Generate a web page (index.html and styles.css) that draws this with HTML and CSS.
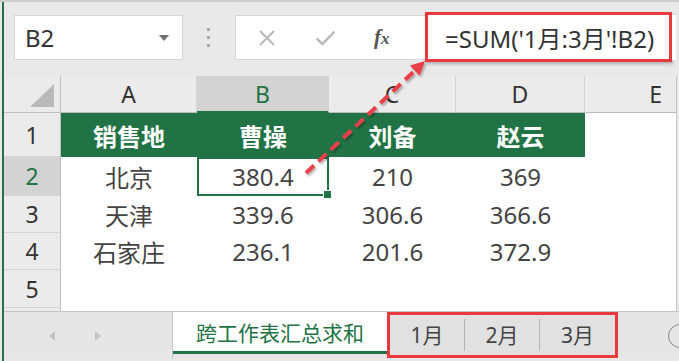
FILE: index.html
```html
<!DOCTYPE html>
<html lang="zh-CN">

<head>
    <meta charset="UTF-8">
    <meta name="viewport" content="width=device-width, initial-scale=1.0">
    <title>跨工作表汇总求和</title>
    <link rel="stylesheet" href="styles.css">
</head>

<body>
    <div class="window">
        <div class="frame">
            <!-- Barra de fórmulas -->
            <div class="formula-bar">
                <div class="name-box">
                    <span class="name">B2</span>
                    <span class="caret"></span>
                </div>
                <div class="grip"><i></i><i></i><i></i></div>
                <div class="fx-box">
                    <svg class="icon cancel" width="18" height="18" viewBox="0 0 18 18">
                        <path d="M2 2 L16 16 M16 2 L2 16" stroke="#b8b8b8" stroke-width="2" fill="none" />
                    </svg>
                    <svg class="icon ok" width="21" height="16" viewBox="0 0 21 16">
                        <path d="M1.5 8.5 L7.5 14 L19.5 1.5" stroke="#b8b8b8" stroke-width="2.4" fill="none" />
                    </svg>
                    <span class="fx">f<small>x</small></span>
                </div>
                <div class="formula">=SUM('1月:3月'!B2)</div>
                <div class="formula-tail"></div>
            </div>

            <!-- Hoja -->
            <div class="grid">
                <div class="corner">
                    <svg width="24" height="23" viewBox="0 0 24 23">
                        <polygon points="24,0 24,23 0,23" fill="#b9b9b9" />
                    </svg>
                </div>
                <div class="ch">A</div>
                <div class="ch on">B</div>
                <div class="ch">C</div>
                <div class="ch">D</div>
                <div class="ch last">E</div>

                <div class="rh">1</div>
                <div class="hd">销售地</div>
                <div class="hd">曹操</div>
                <div class="hd">刘备</div>
                <div class="hd">赵云</div>
                <div class="c"></div>

                <div class="rh on">2</div>
                <div class="c">北京</div>
                <div class="c sel">380.4</div>
                <div class="c">210</div>
                <div class="c">369</div>
                <div class="c"></div>

                <div class="rh">3</div>
                <div class="c">天津</div>
                <div class="c">339.6</div>
                <div class="c">306.6</div>
                <div class="c">366.6</div>
                <div class="c"></div>

                <div class="rh">4</div>
                <div class="c">石家庄</div>
                <div class="c">236.1</div>
                <div class="c">201.6</div>
                <div class="c">372.9</div>
                <div class="c"></div>

                <div class="rh">5</div>
                <div class="c"></div>
                <div class="c"></div>
                <div class="c"></div>
                <div class="c"></div>
                <div class="c"></div>

                <div class="rh sliver"></div>
                <div class="c"></div>
                <div class="c"></div>
                <div class="c"></div>
                <div class="c"></div>
                <div class="c"></div>
            </div>

            <!-- Pestañas -->
            <div class="tab-bar">
                <div class="nav">
                    <span class="arrow-l"></span>
                    <span class="arrow-r"></span>
                </div>
                <div class="tab active">跨工作表汇总求和</div>
                <div class="tabs-box">
                    <div class="tab">1月</div>
                    <div class="tab">2月</div>
                    <div class="tab">3月</div>
                </div>
                <div class="tab-rest"><span class="add"></span></div>
            </div>
        </div>

        <svg class="pointer" width="679" height="361" viewBox="0 0 679 361">
            <defs>
                <filter id="sombra" x="-20%" y="-20%" width="140%" height="140%">
                    <feDropShadow dx="1.5" dy="2" stdDeviation="1.2" flood-color="#000" flood-opacity="0.3" />
                </filter>
            </defs>
            <g filter="url(#sombra)">
                <line x1="306" y1="173" x2="414.8" y2="70.6" stroke="#e8414a" stroke-width="4"
                    stroke-dasharray="11 6" />
                <polygon points="425,61 419.6,75.7 410,65.5" fill="#e8414a" />
            </g>
        </svg>
    </div>
</body>

</html>
```

FILE: styles.css
```css
body {
    margin: 0;
    background-color: #e9e9e9;
    font-family: "Noto Sans", "Noto Sans CJK SC", sans-serif;
    color: #444;
}

.window {
    position: relative;
    width: 679px;
    height: 361px;
    box-sizing: border-box;
    border-top: 2px solid #cdcdcd;
    padding-left: 2px;
    overflow: hidden;
    background: #e9e9e9;
}

.frame {
    border-left: 2px solid #217346;
    height: 100%;
}

/* Barra de fórmulas */
.formula-bar {
    display: flex;
    align-items: flex-start;
    height: 74px;
    box-sizing: border-box;
    padding: 13px 0 0 10px;
}

.name-box {
    width: 169px;
    height: 45px;
    box-sizing: border-box;
    background: #fff;
    border: 1px solid #d6d6d6;
    display: flex;
    align-items: center;
    justify-content: space-between;
    padding: 0 13px 0 10px;
}

.name {
    font-size: 24px;
    color: #333;
}

.caret {
    border-left: 5px solid transparent;
    border-right: 5px solid transparent;
    border-top: 6px solid #707070;
}

.grip {
    width: 3px;
    margin: 13px 25px 0 24px;
    display: flex;
    flex-direction: column;
    gap: 5px;
}

.grip i {
    display: block;
    width: 3px;
    height: 3px;
    background: #a8a8a8;
}

.fx-box {
    width: 190px;
    height: 45px;
    box-sizing: border-box;
    background: #fff;
    border: 1px solid #d6d6d6;
    border-right: none;
    display: flex;
    align-items: center;
}

.icon.cancel {
    margin-left: 22px;
}

.icon.ok {
    margin-left: 39px;
}

.fx {
    margin-left: 38px;
    font-family: "Liberation Serif", serif;
    font-style: italic;
    font-weight: bold;
    font-size: 21px;
    color: #555;
}

.fx small {
    font-size: 17px;
}

.formula {
    width: 247px;
    height: 50px;
    margin-top: -3px;
    box-sizing: border-box;
    border: 3px solid #e8393f;
    background: #fff;
    box-shadow: 1px 2px 3px rgba(0, 0, 0, 0.25);
    display: flex;
    align-items: center;
    padding-left: 17px;
    font-size: 24px;
    color: #333;
    white-space: nowrap;
}

.formula-tail {
    width: 4px;
    height: 45px;
    background: #fff;
}

/* Hoja */
.grid {
    display: grid;
    grid-template-columns: 57px 136px 132px 127px 129px 91px;
    grid-template-rows: 37px 44px 39px 37px 37px 38px 3px;
    width: 672px;
    border-right: 1px solid #c6c6c6;
    background: #fff;
    font-size: 24px;
}

.corner {
    background: #ebebeb;
    border-right: 1px solid #bdbdbd;
    border-bottom: 1px solid #bdbdbd;
    display: flex;
    align-items: flex-end;
    justify-content: flex-end;
    padding: 0 6px 5px 0;
}

.ch {
    background: #ebebeb;
    border-right: 1px solid #d4d4d4;
    border-bottom: 1px solid #bdbdbd;
    display: flex;
    align-items: center;
    justify-content: center;
    font-size: 23px;
    color: #333;
}

.ch.last {
    justify-content: flex-end;
    padding-right: 14px;
    border-right: none;
}

.ch.on {
    background: #d3d3d3;
    color: #217346;
    border-bottom: 2px solid #217346;
}

.rh {
    background: #ebebeb;
    border-right: 1px solid #bdbdbd;
    border-bottom: 1px solid #d4d4d4;
    display: flex;
    align-items: center;
    justify-content: center;
    font-size: 23px;
    color: #333;
}

.rh.on {
    background: #d3d3d3;
    color: #217346;
}

.rh.sliver {
    border-bottom: none;
}

.hd {
    background: #217346;
    color: #fff;
    font-weight: bold;
    display: flex;
    align-items: center;
    justify-content: center;
}

.c {
    display: flex;
    align-items: center;
    justify-content: center;
    color: #444;
}

.c.sel {
    position: relative;
    box-shadow: inset 0 0 0 2px #217346;
}

.c.sel::after {
    content: "";
    position: absolute;
    right: -3px;
    bottom: -3px;
    width: 7px;
    height: 7px;
    background: #217346;
    border: 1px solid #fff;
}

/* Pestañas */
.tab-bar {
    display: flex;
    height: 47px;
    border-top: 1px solid #c6c6c6;
    background: #e6e6e6;
}

.nav {
    width: 169px;
    flex-shrink: 0;
    border-right: 1px solid #c6c6c6;
    display: flex;
    align-items: center;
    padding-left: 45px;
    box-sizing: border-box;
    gap: 40px;
}

.arrow-l,
.arrow-r {
    width: 0;
    height: 0;
    border-top: 5px solid transparent;
    border-bottom: 5px solid transparent;
}

.arrow-l {
    border-right: 6px solid #c4c4c4;
}

.arrow-r {
    border-left: 6px solid #c4c4c4;
}

.tab {
    display: flex;
    align-items: center;
    justify-content: center;
    font-size: 21px;
    color: #444;
}

.tab.active {
    width: 214px;
    height: 39px;
    flex-shrink: 0;
    background: #fff;
    color: #217346;
    border-bottom: 3px solid #217346;
}

.tabs-box {
    width: 231px;
    height: 46px;
    flex-shrink: 0;
    box-sizing: border-box;
    border: 3px solid #e8393f;
    background: #e1e1e1;
    display: flex;
    padding: 4px 0 4px;
}

.tabs-box .tab {
    width: 74px;
    border-right: 1px solid #b4b4b4;
    padding-bottom: 2px;
}

.tabs-box .tab:last-child {
    border-right: none;
    flex: 1;
}

.tab-rest {
    flex: 1;
    min-width: 0;
    display: flex;
    align-items: center;
}

.add {
    margin-left: 50px;
    width: 22px;
    height: 22px;
    border: 1.5px solid #8a8a8a;
    border-radius: 50%;
    flex-shrink: 0;
}

.pointer {
    position: absolute;
    left: 0;
    top: -2px;
    pointer-events: none;
}
```
